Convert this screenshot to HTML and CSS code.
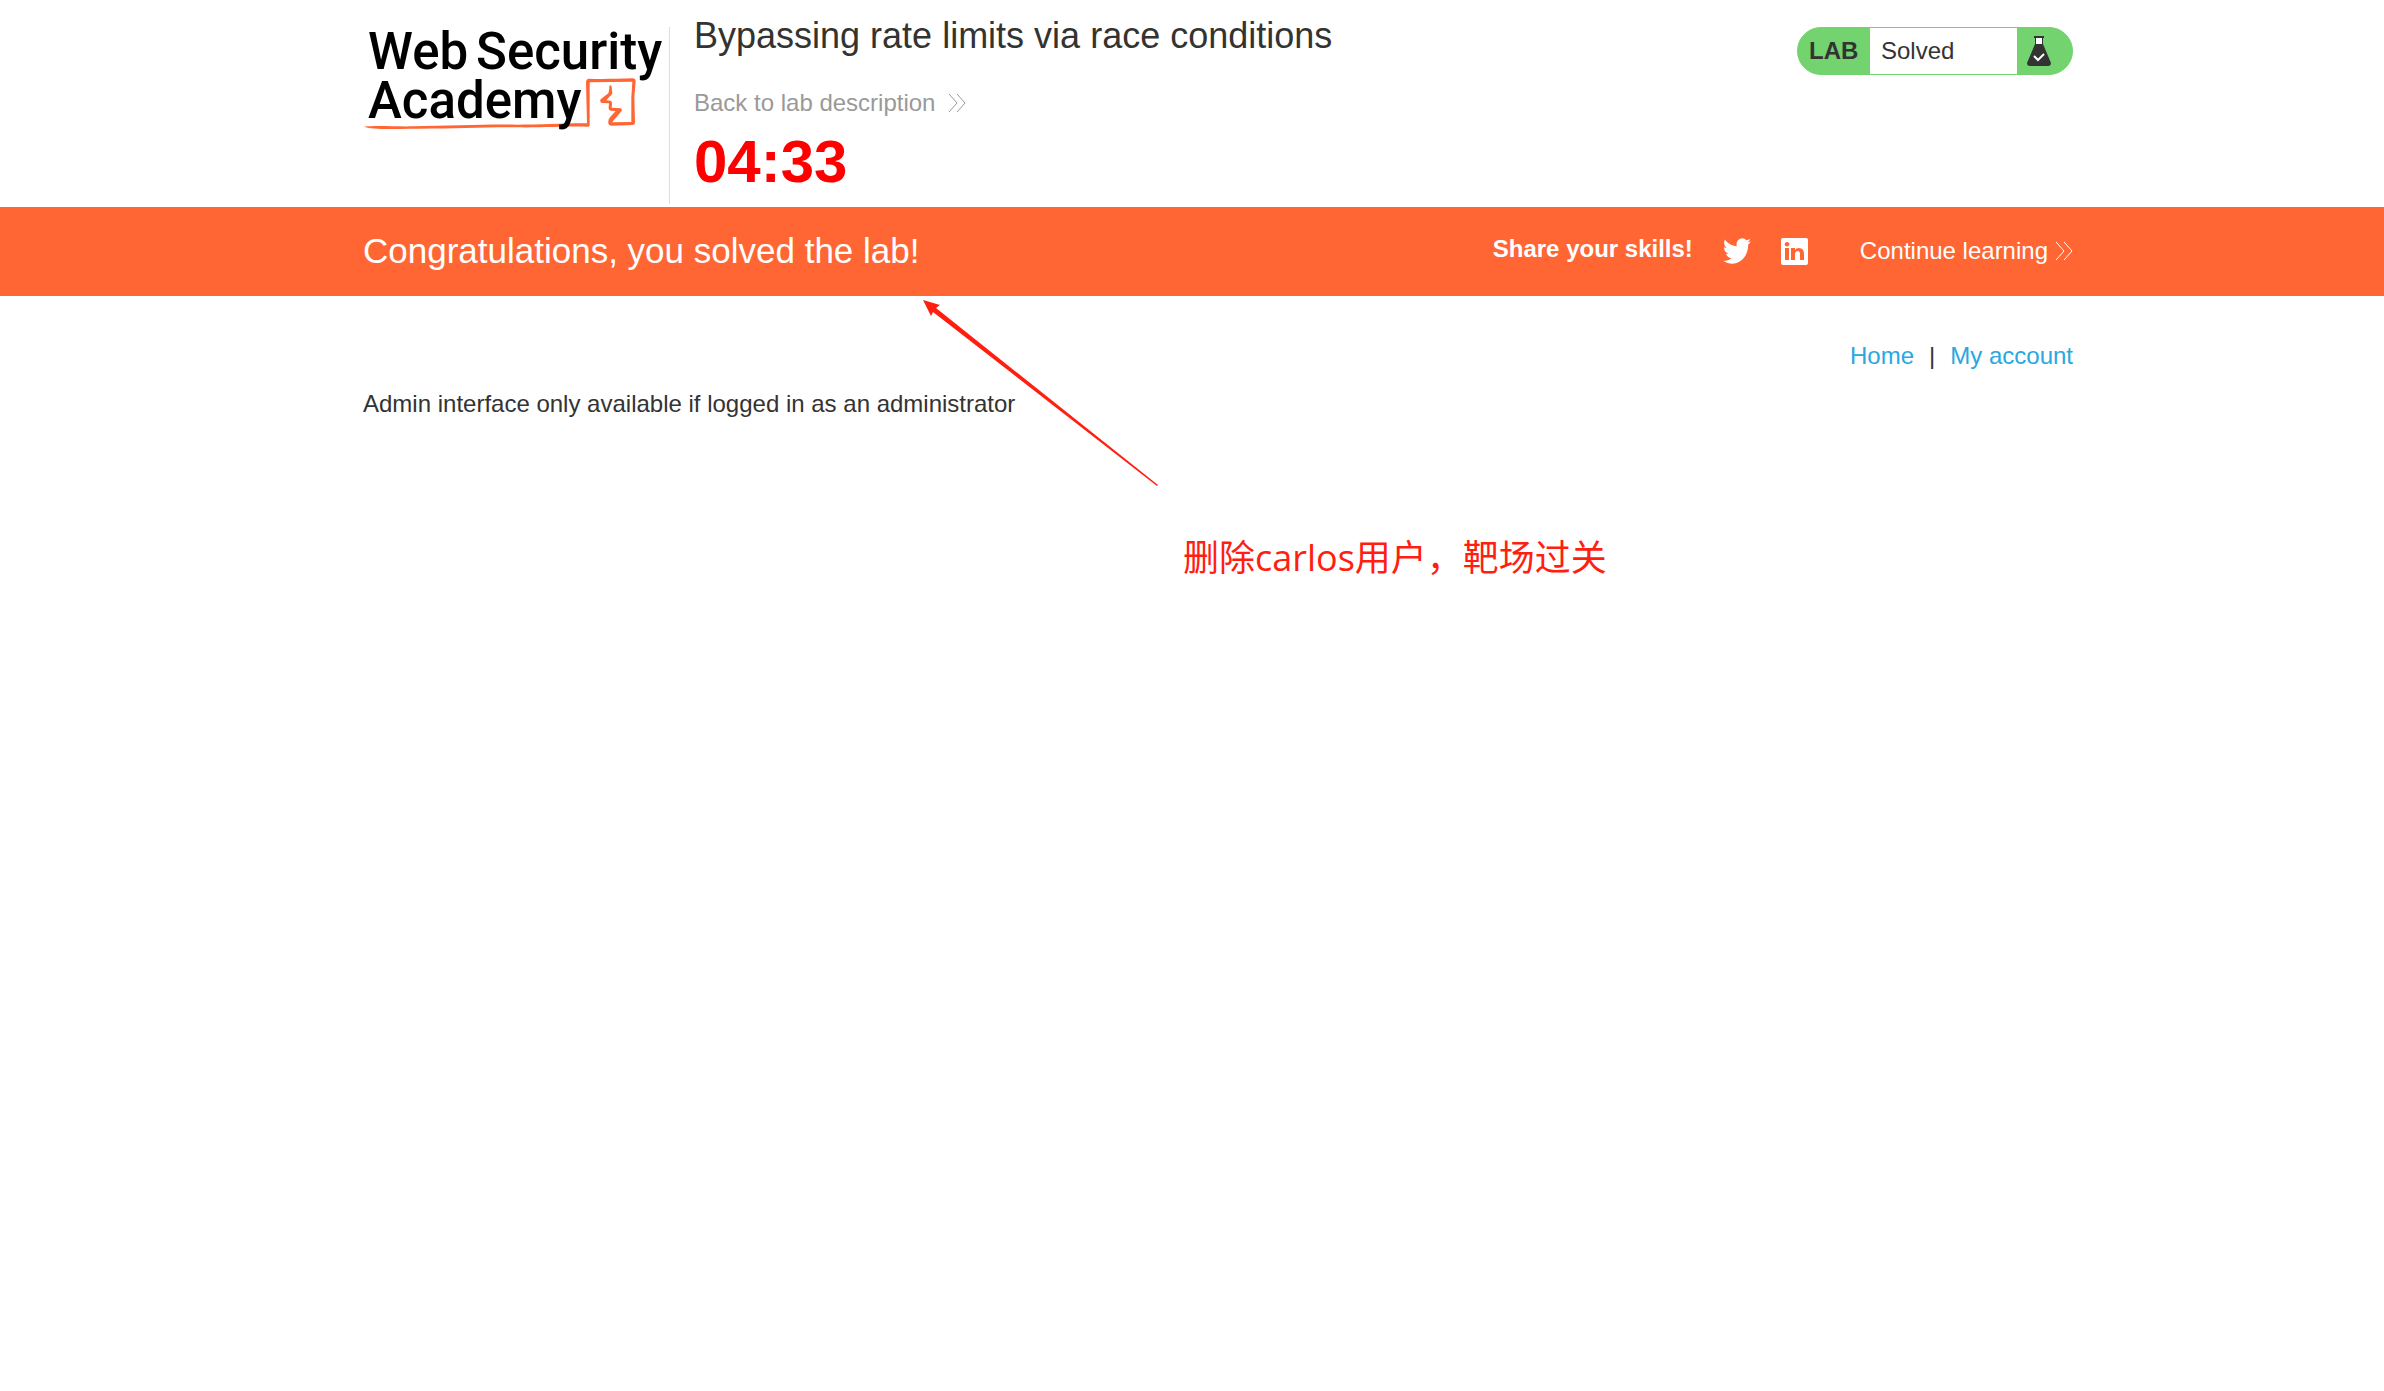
FILE: index.html
```html
<!DOCTYPE html>
<html lang="en">
<head>
<meta charset="utf-8">
<title>Bypassing rate limits via race conditions</title>
<link rel="stylesheet" href="styles.css">
</head>
<body>
<header class="lab-header wrap">
  <a class="logo" href="#" aria-label="Web Security Academy">
    <svg width="305" height="106" viewBox="0 0 305 106">
      <g transform="translate(-13 -17) scale(.33333)" fill="#ff6633">
        <path d="M42 350C80 346 130 350 190 349C300 347 420 342 500 344C580 344 650 339 711 340L708 215Q708 208 716 206C760 208 800 206 850 205Q857 206 857 214L853 262L855 338Q855 344 848 345L786 347Q775 347 775 338Q774 328 780 322L797 303L782 302Q775 300 776 292L777 280L756 279Q748 276 752 268L775 250Q779 240 778 228Q782 223 785 230L787 250Q785 257 777 262L769 271L782 272Q787 275 786 283L785 293L812 295Q819 299 813 305L786 337L844 336L844 262L847 215L719 217L719 347Q716 351 710 350C640 349 580 353 500 352C400 351 300 357 180 356C120 358 60 358 42 350Z"/>
      </g>
      <g class="logo-text">
        <text x="5" y="42">Web</text>
        <text x="113" y="42">Security</text>
        <text x="5" y="91">Academy</text>
      </g>
    </svg>
  </a>
  <div class="title-block">
    <h1>Bypassing rate limits via race conditions</h1>
    <a class="back" href="#">Back to lab description
      <svg class="chevrons" width="18" height="20" viewBox="0 0 18 20"><path d="M1 1l8 9-8 9M9 1l8 9-8 9"/></svg>
    </a>
    <p class="timer">04:33</p>
  </div>
  <div class="status">
    <span class="status-tag">LAB</span>
    <span class="status-text">Solved</span>
    <span class="status-icon">
      <svg width="24" height="30" viewBox="0 0 24 30">
        <path d="M9 2h6v6H9z" fill="#fff"/>
        <path d="M7 0h10v2h-1v6l8 19q0 3-3 3H3q-3 0-3-3L8 8V2H7zM9 2v6h6V2z" fill="#333332"/>
        <path d="M7 20l4 4 6-6" fill="none" stroke="#fff" stroke-width="2"/>
      </svg>
    </span>
  </div>
</header>
<section class="banner">
  <div class="banner-inner wrap">
    <h2>Congratulations, you solved the lab!</h2>
    <strong class="share">Share your skills!</strong>
    <a class="social" href="#" aria-label="Twitter"><svg width="28" height="26" viewBox="0 2 24 20" preserveAspectRatio="none"><path d="M23.95 4.57a10 10 0 0 1-2.82.78 4.96 4.96 0 0 0 2.16-2.73c-.95.56-2 .96-3.13 1.19a4.92 4.92 0 0 0-8.38 4.48C7.69 8.1 4.07 6.13 1.64 3.16a4.82 4.82 0 0 0-.67 2.48c0 1.71.87 3.21 2.19 4.1a4.9 4.9 0 0 1-2.23-.62v.06a4.92 4.92 0 0 0 3.95 4.83 5 5 0 0 1-2.21.08 4.94 4.94 0 0 0 4.6 3.42A9.87 9.87 0 0 1 0 19.54a13.99 13.99 0 0 0 7.56 2.21c9.05 0 14-7.5 14-13.98 0-.21 0-.42-.02-.63a9.94 9.94 0 0 0 2.41-2.57z"/></svg></a>
    <a class="social" href="#" aria-label="LinkedIn"><svg width="27" height="27" viewBox="0 0 27 27"><path fill-rule="evenodd" d="M2 0h23q2 0 2 2v23q0 2-2 2H2q-2 0-2-2V2q0-2 2-2zM4 10h4v12H4zM6 4a2.3 2.3 0 1 0 .01 0zM10 10h4v2q1-2 4-2 5 0 5 6v6h-4v-6q0-3-2.300-3T14 16v6h-4z"/></svg></a>
    <a class="continue" href="#">Continue learning
      <svg class="chevrons" width="18" height="20" viewBox="0 0 18 20"><path d="M1 1l8 9-8 9M9 1l8 9-8 9"/></svg>
    </a>
  </div>
</section>
<main class="wrap">
  <nav><a href="#">Home</a><span>|</span><a href="#">My account</a></nav>
  <p class="message">Admin interface only available if logged in as an administrator</p>
</main>
<svg class="note-arrow" width="240" height="190" viewBox="0 0 240 190"><path d="M0 0l17 5-4 3 222 177-1 1L10 12l-2 4z" fill="#ff1e10"/></svg>
<p class="note" lang="zh-CN">删除carlos用户，靶场过关</p>
</body>
</html>
```
FILE: styles.css
```css
* { box-sizing: border-box; }
body {
  margin: 0;
  position: relative;
  min-height: 100vh;
  background: #fff;
  color: #333332;
  font: 24px/28px "Liberation Sans", Arial, sans-serif;
}
h1, h2, p { margin: 0; font-weight: 400; }
a { color: #29a7e1; text-decoration: none; }
svg { display: block; flex: none; }
.wrap { padding-left: 363px; padding-right: 311px; }

.lab-header { display: flex; align-items: flex-start; height: 207px; }
.logo {
  height: 177px;
  margin-top: 27px;
  padding-right: 1px;
  border-right: 1px solid #dedede;
}
.logo svg { overflow: visible; }
.logo-text { font: 500 51px Roboto, sans-serif; fill: #000; }
.title-block { flex: 1; padding: 15px 0 0 24px; }
h1 { font-size: 36px; line-height: 42px; }
.back { display: flex; align-items: center; gap: 13px; margin-top: 32px; color: #999; }
.chevrons { fill: none; stroke: currentColor; stroke-width: 1; }
.timer { margin-top: 11px; color: #f00; font-size: 60px; line-height: 68px; font-weight: 700; }

.status {
  display: flex;
  width: 276px;
  height: 48px;
  margin-top: 27px;
  overflow: hidden;
  border: 1px solid #72d36f;
  border-radius: 24px;
  background: #72d36f;
  line-height: 46px;
}
.status-tag { width: 72px; padding-left: 11px; font-weight: 700; }
.status-text { flex: 1; padding-left: 11px; background: #fff; }
.status-icon { width: 55px; padding: 8px 0 0 10px; }

.banner { background: #ff6633; color: #fff; }
.banner-inner { display: flex; align-items: center; height: 89px; padding-bottom: 1px; }
.banner h2 { flex: 1; font-size: 35px; line-height: 42px; }
.banner a { color: #fff; }
.banner svg { fill: currentColor; }
.banner .chevrons { fill: none; }
.share { padding-bottom: 4px; }
.social { margin-left: 30px; }
.continue { display: flex; align-items: center; gap: 7px; margin-left: 52px; }

nav { display: flex; justify-content: flex-end; gap: 15px; padding-top: 46px; }
.message { margin-top: 20px; }

.note-arrow { position: absolute; left: 923px; top: 300px; }
.note {
  position: absolute;
  left: 1183px;
  top: 534px;
  color: #ff1e10;
  font: 36px/48px "Open Sans", "Noto Sans CJK SC", sans-serif;
  white-space: nowrap;
}
```
